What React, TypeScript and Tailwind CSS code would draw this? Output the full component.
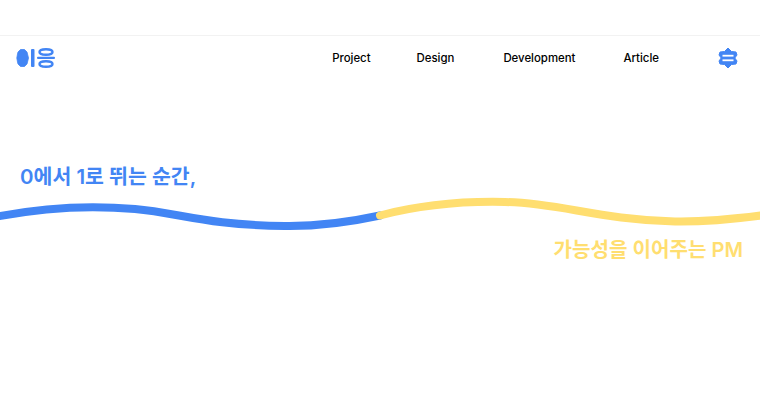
const navItems = [
  { label: "Project", gap: "mr-[46px]" },
  { label: "Design", gap: "mr-[49px]" },
  { label: "Development", gap: "mr-[48px]" },
  { label: "Article", gap: "mr-[59px]" },
];

function Logo() {
  return (
    <svg width="40" height="24" viewBox="0 0 40 24" aria-label="이응" className="shrink-0">
      <path d="M4.5 3.5 L8.5 3.5 L11 6 L11.5 8 L12.5 12 L11.5 16 L11 18 L8.5 20.5 L4.5 20.5 L2 18 L1.5 16 L0.8 12 L1.5 8 L2 6 Z" fill="#4285f4" stroke="#4285f4" strokeWidth="0.8" strokeLinejoin="round" />
      <rect x="15" y="3" width="3.5" height="18" rx="1" fill="#4285f4" />
      <ellipse cx="30" cy="6" rx="6.5" ry="2.8" fill="none" stroke="#4285f4" strokeWidth="2.4" />
      <rect x="21" y="10.7" width="18" height="2.4" rx="1" fill="#4285f4" />
      <ellipse cx="30" cy="18" rx="6.5" ry="2.8" fill="none" stroke="#4285f4" strokeWidth="2.4" />
    </svg>
  );
}

function MenuIcon() {
  return (
    <svg width="20" height="22" viewBox="0 0 20 22" className="shrink-0">
      <path d="M10 1 L13.5 4.5 L18 5 L19 8 L16.8 11 L19 14 L18 17 L13.5 17.5 L10 21 L6.5 17.5 L2 17 L1 14 L3.2 11 L1 8 L2 5 L6.5 4.5 Z" fill="#4285f4" stroke="#4285f4" strokeWidth="1" strokeLinejoin="round" />
      <rect x="4.5" y="7.8" width="11" height="1.8" fill="#fff" />
      <rect x="4.5" y="12.4" width="11" height="1.8" fill="#fff" />
    </svg>
  );
}

export default function App() {
  return (
    <div className="w-[760px] h-[400px] overflow-hidden bg-white pt-[35px] font-['Inter',sans-serif]">
      <header className="h-[45px] border-t border-[#f2f2f2] flex items-center pl-4 pr-[22px]">
        <Logo />
        <nav className="ml-auto flex items-center">
          {navItems.map((item) => (
            <a key={item.label} className={`${item.gap} text-[11.4px] leading-4 font-medium text-black whitespace-nowrap`}>
              {item.label}
            </a>
          ))}
        </nav>
        <MenuIcon />
      </header>

      <main>
        <h1 className="pt-[85px] pl-5 text-[20.5px] leading-6 font-semibold text-[#4285f4] font-['Inter','Noto_Sans_CJK_KR',sans-serif]">
          0에서 1로 뛰는 순간,
        </h1>
        <svg width="760" height="42" viewBox="0 190 760 42" className="block mt-[2px]" fill="none">
          <path d="M-5 216 C 40 207, 90 204, 135 208 C 180 212, 205 224, 285 225 C 320 225.5, 350 221, 380 214.5" stroke="#4285f4" strokeWidth="8" strokeLinecap="round" />
          <path d="M380 214.5 C 420 204, 460 200, 505 201 C 560 202, 600 219, 675 220.5 C 705 221, 735 218, 765 214" stroke="#ffde70" strokeWidth="8" strokeLinecap="round" />
        </svg>
        <p className="mt-[5px] pr-[17px] text-right text-[20.1px] leading-6 font-semibold text-[#ffde70] font-['Inter','Noto_Sans_CJK_KR',sans-serif]">
          가능성을 이어주는 PM
        </p>
      </main>
    </div>
  );
}
